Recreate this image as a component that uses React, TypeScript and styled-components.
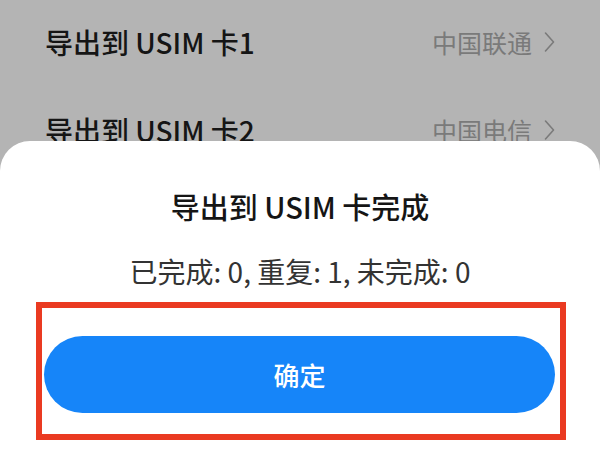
import React from "react";
import styled, { createGlobalStyle } from "styled-components";

const GlobalStyle = createGlobalStyle`
  html, body {
    margin: 0;
    padding: 0;
  }
  body {
    font-family: "Noto Sans CJK SC", "Noto Sans", sans-serif;
  }
`;

const Screen = styled.div`
  width: 600px;
  height: 450px;
  position: relative;
  overflow: hidden;
  background-color: #b4b4b4;
`;

const List = styled.div`
  display: flex;
  flex-direction: column;
  margin-top: -2px;
`;

const Row = styled.div`
  height: 88px;
  display: flex;
  align-items: center;
  justify-content: space-between;
  padding: 0 45px;
`;

const RowTitle = styled.span`
  font-size: 28px;
  font-weight: 500;
  color: #151515;
`;

const RowValue = styled.span`
  display: flex;
  align-items: center;
  gap: 12px;
  font-size: 25px;
  color: #7a7a7a;
`;

const Chevron = styled.svg`
  width: 11px;
  height: 22px;
`;

const Sheet = styled.div`
  position: absolute;
  left: 0;
  right: 0;
  top: 141px;
  bottom: 0;
  background: #fff;
  border-radius: 30px 30px 0 0;
  display: flex;
  flex-direction: column;
  align-items: center;
  padding-top: 45px;
  box-sizing: border-box;
`;

const Title = styled.h2`
  margin: 0;
  font-size: 29px;
  font-weight: 500;
  line-height: 40px;
  color: #151515;
`;

const Summary = styled.p`
  margin: 26px 0 0;
  font-size: 28px;
  font-weight: 400;
  line-height: 38px;
  color: #333;
`;

const Highlight = styled.div`
  margin-top: 12px;
  margin-left: 2px;
  width: 530px;
  height: 138px;
  box-sizing: border-box;
  border: 6px solid #ea3a21;
  padding: 28px 5px 0 2px;
`;

const ConfirmButton = styled.button`
  width: 100%;
  height: 77px;
  border: none;
  border-radius: 39px;
  background: #1685f9;
  color: #fff;
  font-family: inherit;
  font-size: 26px;
  font-weight: 500;
  cursor: pointer;
`;

const rows = [
  { name: "导出到 USIM 卡1", carrier: "中国联通" },
  { name: "导出到 USIM 卡2", carrier: "中国电信" },
];

export default function App() {
  return (
    <>
      <GlobalStyle />
      <Screen>
        <List>
          {rows.map((r) => (
            <Row key={r.name}>
              <RowTitle>{r.name}</RowTitle>
              <RowValue>
                {r.carrier}
                <Chevron viewBox="0 0 11 22" fill="none">
                  <path d="M1.5 2l8 9-8 9" stroke="#7a7a7a" strokeWidth="1.6" strokeLinecap="round" strokeLinejoin="round" />
                </Chevron>
              </RowValue>
            </Row>
          ))}
        </List>
        <Sheet>
          <Title>导出到 USIM 卡完成</Title>
          <Summary>已完成: 0, 重复: 1, 未完成: 0</Summary>
          <Highlight>
            <ConfirmButton>确定</ConfirmButton>
          </Highlight>
        </Sheet>
      </Screen>
    </>
  );
}
